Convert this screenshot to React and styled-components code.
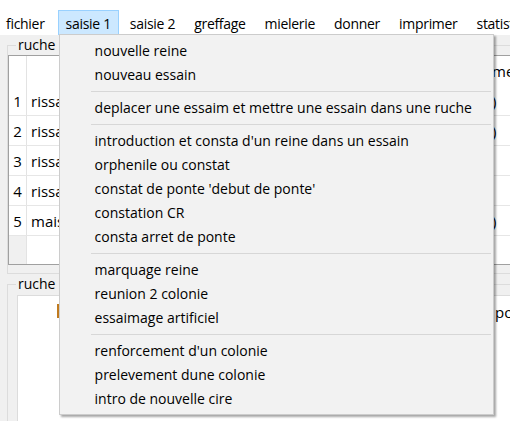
import React from 'react';
import styled, { createGlobalStyle } from 'styled-components';

const Global = createGlobalStyle`
  html, body {
    margin: 0;
    padding: 0;
    overflow: hidden;
    background: #f0f0f0;
  }
  body {
    font-family: "Open Sans", "Noto Sans", sans-serif;
    font-size: 14px;
    color: #000;
  }
`;

const Window = styled.div`
  width: 510px;
  height: 421px;
  overflow: hidden;
  background: #f0f0f0;
`;

const MenuBar = styled.div`
  display: flex;
  align-items: stretch;
  height: 25px;
  padding: 10px 0 0 0;
  margin-left: -2px;
  background: #fff;
  white-space: nowrap;
`;

const MenuItem = styled.div`
  position: relative;
  display: flex;
  align-items: center;
  padding: 2px 7px 0;
  margin-right: 3px;
  letter-spacing: -0.3px;
  border: 1px solid ${(p) => (p.$active ? '#99d1ff' : 'transparent')};
  background: ${(p) => (p.$active ? '#cce8ff' : 'transparent')};

  &:first-child {
    margin-right: 5px;
  }
`;

const Dropdown = styled.div`
  position: absolute;
  top: 100%;
  left: 0;
  width: 433px;
  padding: 4px 0 3px;
  letter-spacing: 0;
  background: #f2f2f2;
  border: 1px solid #cccccc;
  box-shadow: 2px 2px 2px rgba(0, 0, 0, 0.35);
  z-index: 10;
`;

const DropItem = styled.div`
  height: 24px;
  line-height: 24px;
  padding-left: 35px;
`;

const Separator = styled.div`
  height: 1px;
  margin: 4px 2px 4px 31px;
  background: #d7d7d7;
`;

const Content = styled.div`
  display: flex;
  flex-direction: column;
  padding-left: 7px;
`;

const Group = styled.fieldset`
  box-sizing: border-box;
  width: 530px;
  margin: ${(p) => p.$top}px 0 0 0;
  padding: 0 0 8px 0;
  border: 1px solid #dcdcdc;
  flex-shrink: 0;
`;

const Legend = styled.legend`
  margin-left: 8px;
  padding: 0 2px;
  font-size: 14px;
  line-height: 18px;
`;

const Grid = styled.div`
  box-sizing: border-box;
  height: 210px;
  margin-top: 1px;
  background: #fff;
  border: 1px solid #a0a0a0;
  display: flex;
  flex-direction: column;
`;

const Row = styled.div`
  display: flex;
  height: ${(p) => (p.$header ? 30 : 29)}px;
  border-bottom: ${(p) => (p.$header ? 'none' : '1px solid #e6e6e6')};
  flex-shrink: 0;
`;

const NumCell = styled.div`
  width: 17px;
  border-right: 1px solid #e3e3e3;
  display: flex;
  align-items: center;
  justify-content: center;
  font-size: 15px;
`;

const TextCell = styled.div`
  flex: 1;
  display: flex;
  align-items: center;
  padding-left: 4px;
  font-size: 15px;
`;

const EndCell = styled.div`
  width: 43px;
  display: flex;
  align-items: center;
  font-size: 15px;
`;

const Filler = styled.div`
  flex: 1;
  display: flex;
`;

const FillNum = styled.div`
  width: 17px;
  background: #f0f0f0;
  border-right: 1px solid #e3e3e3;
`;

const Panel = styled.div`
  margin: 2px 0 0 9px;
  height: 200px;
  background: #fff;
  border: 1px solid #dcdcdc;
  display: flex;
  align-items: flex-start;
  padding-top: 7px;
`;

const Mark = styled.span`
  margin: 1px 0 0 39px;
  width: 2px;
  height: 14px;
  background: #c07a1e;
`;

const PanelText = styled.span`
  margin-left: auto;
  width: 40px;
  font-size: 15px;
  line-height: 18px;
`;

const menuBar = ['fichier', 'saisie 1', 'saisie 2', 'greffage', 'mielerie', 'donner', 'imprimer', 'statistiques'];

const menu = [
  ['nouvelle reine', 'nouveau essain'],
  ['deplacer une essaim et mettre une essain dans une ruche'],
  [
    "introduction et consta d'un reine dans un essain",
    'orphenile ou constat',
    "constat de ponte 'debut de ponte'",
    'constation CR',
    'consta arret de ponte',
  ],
  ['marquage reine', 'reunion 2 colonie', 'essaimage artificiel'],
  ["renforcement d'un colonie", 'prelevement dune colonie', 'intro de nouvelle cire'],
];

const rows = [
  { n: 1, name: 'rissani', end: ')' },
  { n: 2, name: 'rissani', end: ')' },
  { n: 3, name: 'rissani', end: '' },
  { n: 4, name: 'rissani', end: '' },
  { n: 5, name: 'maison', end: ')' },
];

const App = () => {
  return (
    <Window>
      <Global />
      <MenuBar>
        {menuBar.map((m) => (
          <MenuItem key={m} $active={m === 'saisie 1'}>
            {m}
            {m === 'saisie 1' && (
              <Dropdown>
                {menu.map((group, gi) => (
                  <React.Fragment key={gi}>
                    {gi > 0 && <Separator />}
                    {group.map((item) => (
                      <DropItem key={item}>{item}</DropItem>
                    ))}
                  </React.Fragment>
                ))}
              </Dropdown>
            )}
          </MenuItem>
        ))}
      </MenuBar>
      <Content>
        <Group $top={1}>
          <Legend>ruche sur rucher</Legend>
          <Grid>
            <Row $header>
              <NumCell />
              <TextCell />
              <EndCell>mere</EndCell>
            </Row>
            {rows.map((r) => (
              <Row key={r.n}>
                <NumCell>{r.n}</NumCell>
                <TextCell>{r.name}</TextCell>
                <EndCell>{r.end}</EndCell>
              </Row>
            ))}
            <Filler>
              <FillNum />
            </Filler>
          </Grid>
        </Group>
        <Group $top={1}>
          <Legend>ruche a vendre</Legend>
          <Panel>
            <Mark />
            <PanelText>po</PanelText>
          </Panel>
        </Group>
      </Content>
    </Window>
  );
};

export default App;
